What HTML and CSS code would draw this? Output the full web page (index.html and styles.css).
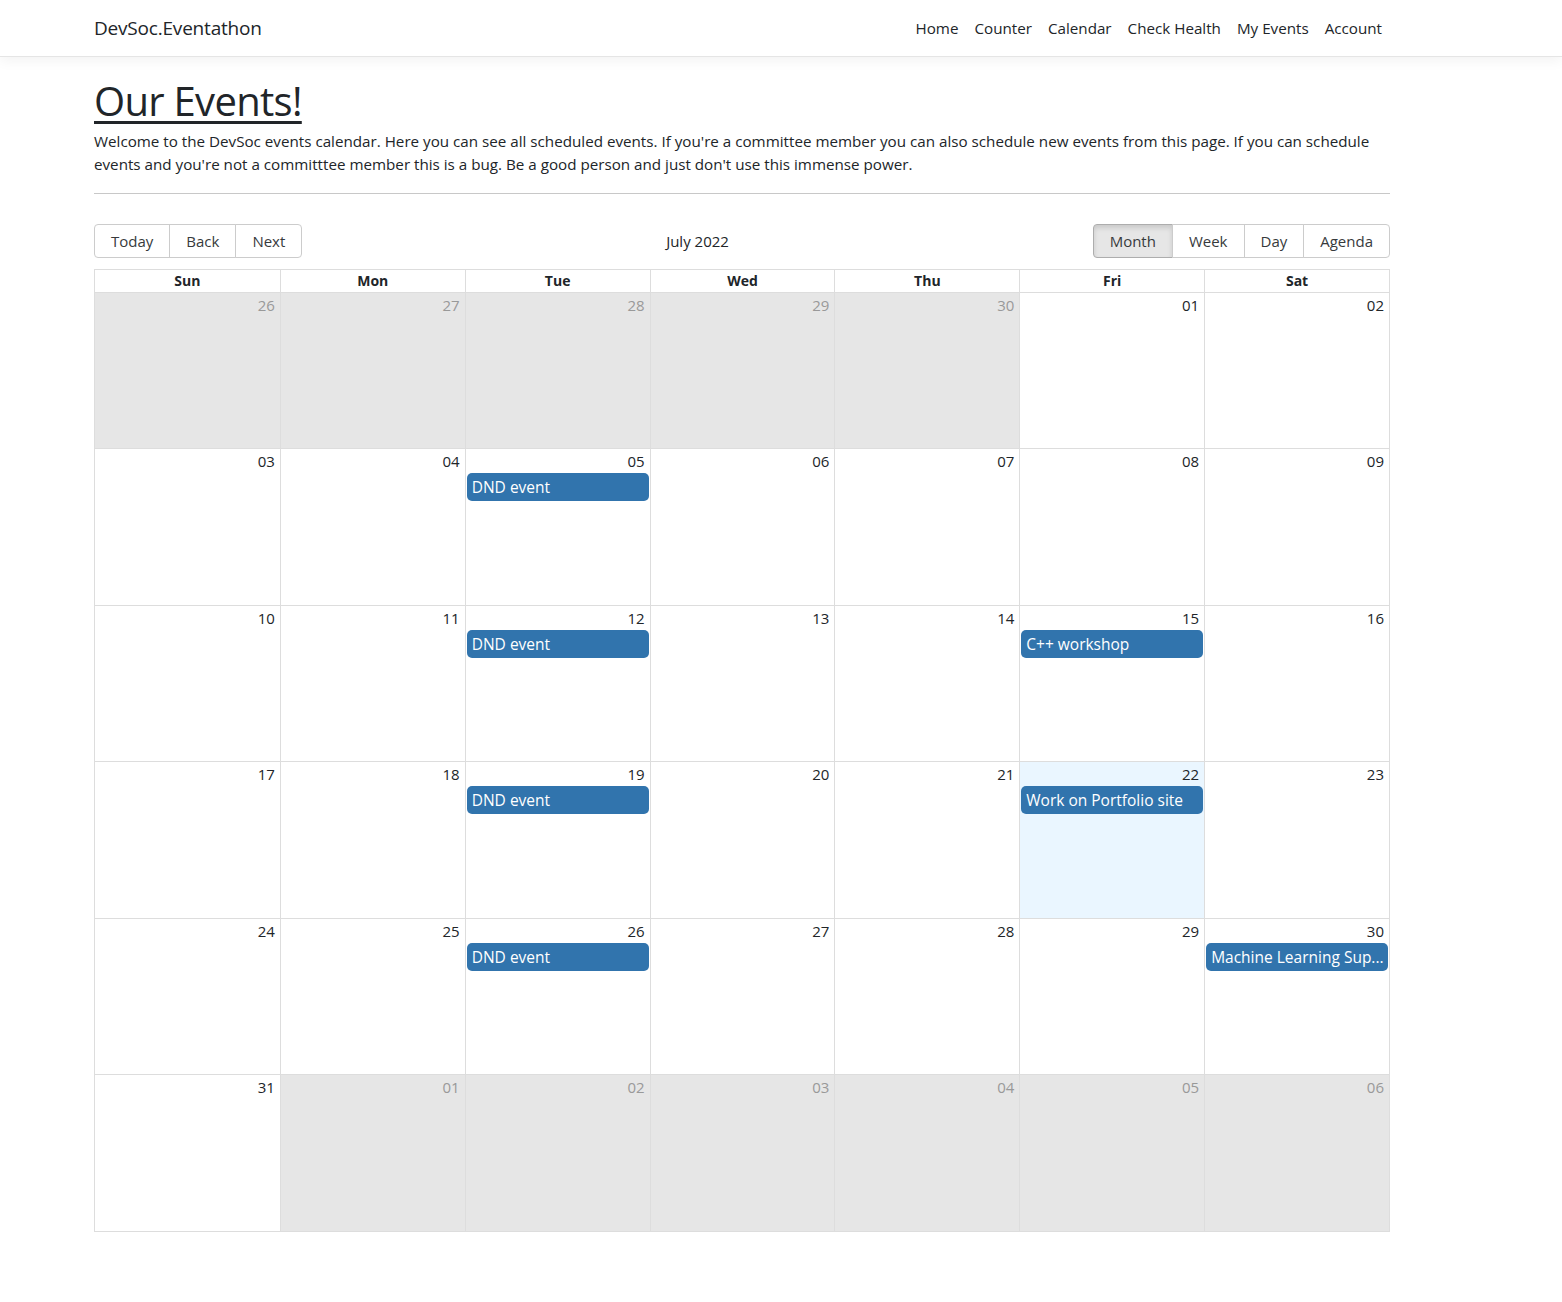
FILE: index.html
```html
<!DOCTYPE html>
<html lang="en">
<head>
<meta charset="utf-8">
<title>DevSoc.Eventathon</title>
<link rel="stylesheet" href="styles.css">
</head>
<body>
<header class="navbar">
  <div class="wrap nav-inner">
    <a class="brand" href="#">DevSoc.Eventathon</a>
    <nav class="nav-links">
      <a href="#">Home</a>
      <a href="#">Counter</a>
      <a href="#">Calendar</a>
      <a href="#">Check Health</a>
      <a href="#">My Events</a>
      <a href="#">Account</a>
    </nav>
  </div>
</header>
<main class="wrap">
  <h1 class="title">Our Events!</h1>
  <p class="intro">Welcome to the DevSoc events calendar. Here you can see all scheduled events. If you're a committee member you can also schedule new events from this page. If you can schedule events and you're not a committtee member this is a bug. Be a good person and just don't use this immense power.</p>
  <hr class="rule">
  <div class="toolbar">
    <div class="btn-group">
      <button>Today</button><button>Back</button><button>Next</button>
    </div>
    <span class="toolbar-label">July 2022</span>
    <div class="btn-group">
      <button class="active">Month</button><button>Week</button><button>Day</button><button>Agenda</button>
    </div>
  </div>
  <div class="month">
    <div class="head-row">
      <div class="hcell">Sun</div><div class="hcell">Mon</div><div class="hcell">Tue</div><div class="hcell">Wed</div><div class="hcell">Thu</div><div class="hcell">Fri</div><div class="hcell">Sat</div>
    </div>
    <div class="week">
      <div class="day off"><span class="date">26</span></div>
      <div class="day off"><span class="date">27</span></div>
      <div class="day off"><span class="date">28</span></div>
      <div class="day off"><span class="date">29</span></div>
      <div class="day off"><span class="date">30</span></div>
      <div class="day"><span class="date">01</span></div>
      <div class="day"><span class="date">02</span></div>
    </div>
    <div class="week">
      <div class="day"><span class="date">03</span></div>
      <div class="day"><span class="date">04</span></div>
      <div class="day"><span class="date">05</span><div class="event">DND event</div></div>
      <div class="day"><span class="date">06</span></div>
      <div class="day"><span class="date">07</span></div>
      <div class="day"><span class="date">08</span></div>
      <div class="day"><span class="date">09</span></div>
    </div>
    <div class="week">
      <div class="day"><span class="date">10</span></div>
      <div class="day"><span class="date">11</span></div>
      <div class="day"><span class="date">12</span><div class="event">DND event</div></div>
      <div class="day"><span class="date">13</span></div>
      <div class="day"><span class="date">14</span></div>
      <div class="day"><span class="date">15</span><div class="event">C++ workshop</div></div>
      <div class="day"><span class="date">16</span></div>
    </div>
    <div class="week">
      <div class="day"><span class="date">17</span></div>
      <div class="day"><span class="date">18</span></div>
      <div class="day"><span class="date">19</span><div class="event">DND event</div></div>
      <div class="day"><span class="date">20</span></div>
      <div class="day"><span class="date">21</span></div>
      <div class="day today"><span class="date">22</span><div class="event">Work on Portfolio site</div></div>
      <div class="day"><span class="date">23</span></div>
    </div>
    <div class="week">
      <div class="day"><span class="date">24</span></div>
      <div class="day"><span class="date">25</span></div>
      <div class="day"><span class="date">26</span><div class="event">DND event</div></div>
      <div class="day"><span class="date">27</span></div>
      <div class="day"><span class="date">28</span></div>
      <div class="day"><span class="date">29</span></div>
      <div class="day"><span class="date">30</span><div class="event">Machine Learning Sup...</div></div>
    </div>
    <div class="week">
      <div class="day"><span class="date">31</span></div>
      <div class="day off"><span class="date">01</span></div>
      <div class="day off"><span class="date">02</span></div>
      <div class="day off"><span class="date">03</span></div>
      <div class="day off"><span class="date">04</span></div>
      <div class="day off"><span class="date">05</span></div>
      <div class="day off"><span class="date">06</span></div>
    </div>
  </div>
</main>
</body>
</html>
```

FILE: styles.css
```css
* { box-sizing: border-box; }
html, body {
  margin: 0;
  padding: 0;
  background: #fff;
  color: #212529;
  font-family: "Open Sans", "Noto Sans", sans-serif;
  font-size: 16px;
  line-height: 1.5;
}
.wrap {
  width: 1296px;
  margin-left: 94px;
}
.navbar {
  height: 57px;
  border-bottom: 1px solid #e5e5e5;
  box-shadow: 0 .25rem .75rem rgba(0,0,0,.05);
}
.nav-inner {
  height: 56px;
  display: flex;
  align-items: center;
  justify-content: space-between;
}
.brand {
  font-size: 19px;
  color: #212529;
  text-decoration: none;
  letter-spacing: -0.2px;
}
.nav-links {
  display: flex;
}
.nav-links a {
  color: #212529;
  text-decoration: none;
  padding: 0 8px;
  font-size: 15.2px;
}
.title {
  margin: 20px 0 5px;
  font-size: 40px;
  font-weight: 500;
  line-height: 1.2;
  text-decoration: underline;
  text-decoration-thickness: 3px;
  text-underline-offset: 5px;
  letter-spacing: -0.7px;
}
.intro {
  margin: 0 0 17px;
  font-size: 15.2px;
}
.rule {
  margin: 0 0 30px;
  border: 0;
  border-top: 1px solid #c8c8c8;
}
.toolbar {
  display: flex;
  align-items: center;
  margin-bottom: 11px;
  font-size: 16px;
}
.toolbar-label {
  flex-grow: 1;
  text-align: center;
  padding: 0 10px;
  font-size: 15px;
  line-height: 26px;
}
.btn-group {
  display: flex;
}
.btn-group button {
  font-family: inherit;
  font-size: 15px;
  color: #373a3c;
  background: #fff;
  border: 1px solid #ccc;
  padding: 5px 16px;
  line-height: 22px;
  margin: 0;
  margin-left: -1px;
}
.btn-group button:first-child {
  margin-left: 0;
  border-radius: 4px 0 0 4px;
}
.btn-group button:last-child {
  border-radius: 0 4px 4px 0;
}
.btn-group button.active {
  background: #e6e6e6;
  border-color: #adadad;
  box-shadow: inset 0 3px 5px rgba(0,0,0,.125);
}
.month {
  border: 1px solid #ddd;
  display: flex;
  flex-direction: column;
  height: 963px;
}
.head-row {
  display: grid;
  grid-template-columns: repeat(7, minmax(0, 1fr));
  border-bottom: 1px solid #ddd;
}
.hcell {
  text-align: center;
  font-weight: 700;
  font-size: 14px;
  line-height: 22px;
  padding: 0 3px;
}
.hcell + .hcell { border-left: 1px solid #ddd; }
.week {
  flex: 1;
  display: grid;
  grid-template-columns: repeat(7, minmax(0, 1fr));
}
.week + .week { border-top: 1px solid #ddd; }
.day {
  display: flex;
  flex-direction: column;
  min-width: 0;
  padding: 0 1px;
}
.day + .day { border-left: 1px solid #ddd; }
.day.off { background: #e6e6e6; }
.day.off .date { color: #999; }
.day.today { background: #eaf6ff; }
.date {
  text-align: right;
  padding-right: 4px;
  font-size: 15px;
  line-height: 24px;
}
.event {
  background: #3174ad;
  color: #fff;
  border-radius: 5px;
  padding: 2px 5px;
  font-size: 15.5px;
  line-height: 24px;
  white-space: nowrap;
  overflow: hidden;
}
```
